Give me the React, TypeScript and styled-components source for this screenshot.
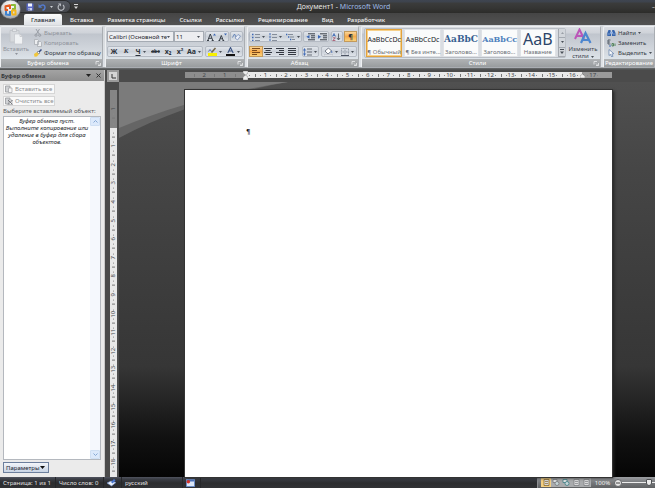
import React from 'react';
import styled, { createGlobalStyle, css } from 'styled-components';

const GlobalStyle = createGlobalStyle`
  * { box-sizing: border-box; }
  html, body { margin: 0; background: #4a4a4a; }
  body, button, input, select {
    font-family: "Noto Sans", "Open Sans", sans-serif;
    font-size: 6px;
    line-height: 8px;
  }
  button { margin: 0; padding: 0; border: 0; background: none; color: inherit; white-space: nowrap; }
  svg { display: block; flex: none; }
`;

const Window = styled.div`
  display: flex;
  flex-direction: column;
  height: 100vh;
  min-height: 240px;
  overflow: hidden;
  color: #333a44;
`;

/* ---------- title bar and tabs ---------- */

const Header = styled.header`
  position: relative;
  flex: none;
`;

const TitleBar = styled.div`
  display: grid;
  grid-template-columns: 1fr auto 1fr;
  align-items: center;
  height: 13px;
  background: linear-gradient(#3f4550 0, #3d434d 2px, #3b3c3c 3px, #353534 8px, #2c2c2a 13px);
`;

const QuickAccess = styled.div`
  display: flex;
  align-items: center;
  gap: 4px;
  margin-left: 18px;
`;

const QuickPill = styled.div`
  display: flex;
  align-items: center;
  gap: 4px;
  height: 11px;
  width: 52px;
  padding-left: 8px;
  border-radius: 0 6px 6px 0;
  background: linear-gradient(#565a63, #45474c);
  box-shadow: 0 0 0 1px #2c2d2f;
`;

const Title = styled.h1`
  margin: 0 0 0 32px;
  font-size: 7px;
  font-weight: 400;
  line-height: 12px;
  color: #e4e4e4;
  span { color: #9dbbe6; }
`;

const WindowButtons = styled.div`
  justify-self: end;
  color: #e8e8e8;
`;

const Orb = styled.button`
  position: absolute;
  left: 0;
  top: 0;
`;

const TabRow = styled.nav`
  display: flex;
  align-items: flex-end;
  height: 12px;
  padding-left: 24px;
  background: linear-gradient(#454545, #525252);
`;

const Tab = styled.button<{ $active?: boolean }>`
  height: 11px;
  padding: 0 7px;
  border-radius: 2px 2px 0 0;
  font-weight: 500;
  color: #f2f2f2;
  ${p => p.$active && css`
    margin-right: 1px;
    color: #2b2f36;
    background: linear-gradient(#fbfbfb, #dfe2e6);
  `}
`;

/* ---------- ribbon ---------- */

const Ribbon = styled.div`
  display: flex;
  flex: none;
  gap: 2px;
  height: 45px;
  padding: 1px 0 2px;
  background: linear-gradient(#d5d8dc 0, #dfe3e7 42px, #6c6f70 43px, #4b4d4d 45px);
`;

const GroupBox = styled.section<{ $width?: number }>`
  display: flex;
  flex-direction: column;
  flex: ${p => (p.$width ? `0 0 ${p.$width}px` : '1 1 0')};
  min-width: 0;
  border: 1px solid #a9adb2;
  border-top-color: #eef0f2;
  border-left-color: #eef0f2;
  border-radius: 2px;
  background: linear-gradient(#d9dce1 0, #cfd3d9 6px, #c0c5cd 7px, #d3d8de 24px, #dde4ea 33px);
`;

const GroupBody = styled.div`
  display: flex;
  flex: 1;
  min-height: 0;
`;

const GroupLabel = styled.div`
  display: flex;
  align-items: center;
  flex: none;
  height: 8px;
  color: #fff;
  background: linear-gradient(#b0b3b5, #989c9e);
  span { flex: 1; text-align: center; white-space: nowrap; }
`;

const Stack = styled.div`
  display: flex;
  flex-direction: column;
  justify-content: space-between;
  flex: 1;
  padding: 1px 0 1px 3px;
`;

const Command = styled.button<{ $muted?: boolean }>`
  display: flex;
  align-items: center;
  gap: 2px;
  height: 10px;
  color: ${p => (p.$muted ? '#8f939b' : '#333a44')};
`;

const BigButton = styled.button<{ $muted?: boolean; $width: number }>`
  display: flex;
  flex-direction: column;
  align-items: center;
  flex: none;
  width: ${p => p.$width}px;
  padding-top: 1px;
  line-height: 7px;
  color: ${p => (p.$muted ? '#8f939b' : '#3c434d')};
  svg + span { margin-top: 1px; }
`;

const InlineLabel = styled.span`
  display: flex;
  align-items: center;
  gap: 2px;
`;

const ToolRows = styled.div`
  display: flex;
  flex-direction: column;
  gap: 4px;
  flex: 1;
  padding: 4px 1px 0;
`;

const ToolRow = styled.div`
  display: flex;
  justify-content: space-between;
  height: 11px;
`;

const ButtonSet = styled.div`
  display: flex;
  height: 11px;
  border: 1px solid #b4bac3;
  border-radius: 2px;
  background: linear-gradient(#e2e6ec, #cbd1d9 50%, #dfe4ea);
`;

const Tool = styled.button<{ $width?: number; $on?: boolean }>`
  display: flex;
  align-items: center;
  justify-content: center;
  gap: 2px;
  width: ${p => p.$width ?? 12}px;
  height: 9px;
  color: #2d333c;
  ${p => p.$on && css`
    background: linear-gradient(#fbd598, #f5ab4c 50%, #fbd27a);
    box-shadow: 0 0 0 1px #c39a5c;
  `}
`;

const Glyph = styled.span<{ $kind?: 'under' | 'strike' | 'italic' | 'serif'; $small?: boolean }>`
  font-size: ${p => (p.$small ? 5 : 7)}px;
  line-height: 9px;
  font-weight: 700;
  font-style: ${p => (p.$kind === 'italic' ? 'italic' : 'normal')};
  font-family: ${p => (p.$kind === 'serif' || p.$kind === 'italic' ? '"Liberation Serif", serif' : '"Noto Sans", sans-serif')};
  text-decoration: ${p => (p.$kind === 'under' ? 'underline' : p.$kind === 'strike' ? 'line-through' : 'none')};
`;

const Combos = styled.div`
  display: flex;
`;

const ComboBox = styled.label<{ $width: number }>`
  display: flex;
  align-items: center;
  width: ${p => p.$width}px;
  height: 11px;
  padding-right: 3px;
  border: 1px solid #a5abb3;
  background: #ecedf0;
  select {
    flex: 1;
    min-width: 0;
    height: 9px;
    padding: 0 0 0 1px;
    border: 0;
    appearance: none;
    background: none;
    color: #20242a;
    text-overflow: clip;
  }
`;

const Gallery = styled.div`
  display: flex;
  flex: 1;
  gap: 2px;
  min-width: 0;
  margin: 1px 0 1px 2px;
  padding: 0 0 0 1px;
  border: 1px solid #b9bec5;
  border-radius: 2px;
  background: #d9dde2;
`;

const StyleTile = styled.button<{ $on?: boolean }>`
  display: flex;
  flex-direction: column;
  justify-content: space-between;
  flex: 1 1 0;
  min-width: 0;
  padding: 1px 0 0;
  border: 1px solid ${p => (p.$on ? '#e3a33c' : '#dfe2e6')};
  background: #fafbfb;
  color: #6b6f75;
  box-shadow: ${p => (p.$on ? 'inset 0 0 0 1px #f7d18b' : 'none')};
`;

const Sample = styled.span<{ $size: number; $color: string; $serif?: boolean }>`
  display: block;
  width: 100%;
  height: 17px;
  line-height: 17px;
  text-align: center;
  font-size: ${p => p.$size}px;
  font-weight: ${p => (p.$serif ? 700 : 400)};
  font-family: ${p => (p.$serif ? '"DejaVu Serif", serif' : '"Noto Sans", sans-serif')};
  color: ${p => p.$color};
`;

const TileName = styled.span`
  display: block;
  width: 100%;
  text-align: center;
`;

const GalleryArrows = styled.div`
  display: grid;
  grid-template-rows: repeat(3, 1fr);
  flex: none;
  width: 7px;
  border-left: 1px solid #a4a9b0;
  button { display: flex; align-items: center; justify-content: center; border-bottom: 1px solid #a4a9b0; background: #d2d6db; }
`;

/* ---------- workspace ---------- */

const Workspace = styled.main`
  display: flex;
  flex: 1;
  min-height: 0;
`;

const Pane = styled.aside`
  display: flex;
  flex-direction: column;
  flex: none;
  width: 105px;
  border-right: 1px solid #c9c9c9;
  background: #ebebeb;
`;

const PaneHeader = styled.div`
  display: flex;
  align-items: center;
  gap: 5px;
  height: 11px;
  padding: 0 3px 0 1px;
  color: #34373b;
  background: linear-gradient(#a3a3a3, #8e8e8e);
  h2 { flex: 1; margin: 0; font-size: 6px; font-weight: 700; white-space: nowrap; }
`;

const PaneBody = styled.div`
  display: flex;
  flex-direction: column;
  align-items: flex-start;
  flex: 1;
  min-height: 0;
  padding: 3px 3px 4px;
`;

const PaneButton = styled.button`
  display: flex;
  align-items: center;
  gap: 2px;
  width: 52px;
  height: 10px;
  margin-bottom: 2px;
  padding-left: 1px;
  border: 1px solid #d6d6d6;
  background: #fafafa;
  color: #8b8d91;
`;

const PaneCaption = styled.div`
  line-height: 7px;
  color: #55585c;
  white-space: nowrap;
`;

const ItemBox = styled.div`
  display: flex;
  flex: 1;
  align-self: stretch;
  min-height: 0;
  margin: 1px 0 2px;
  border: 1px solid #b4b8be;
  background: #fff;
  p { flex: 1; margin: 1px 0 0; text-align: center; font-style: italic; line-height: 7px; color: #22252a; }
`;

const ScrollTrack = styled.div`
  display: flex;
  flex-direction: column;
  justify-content: space-between;
  width: 10px;
  background: #f5f8fd;
  button { display: flex; align-items: center; justify-content: center; height: 9px; border: 1px solid #cfdff3; border-radius: 1px; background: #dce9fb; color: #86a8d4; }
`;

const OptionsButton = styled.button`
  display: flex;
  align-items: center;
  justify-content: space-between;
  width: 46px;
  height: 11px;
  padding: 0 3px 0 2px;
  border: 1px solid #6c7f9d;
  background: linear-gradient(#f3f6fa, #c7d3e4);
  color: #1c2430;
`;

const DocumentArea = styled.div`
  display: grid;
  grid-template-columns: 14px 1fr;
  grid-template-rows: 12px 1fr;
  flex: 1;
  min-width: 0;
  background: #4b4b4b;
`;

const TabStop = styled.button`
  display: flex;
  align-items: center;
  justify-content: center;
  width: 12px;
  height: 12px;
  margin-left: 2px;
  border: 2px solid #9a9a9a;
  background: #d4d4d4;
`;

const HRuler = styled.div`
  position: relative;
  display: grid;
  grid-template-columns: repeat(20, 1fr);
  height: 6px;
  margin: 2px 43px 0 66px;
  padding: 0 9px;
  background: linear-gradient(90deg, #8d8d8d 14%, #e9e9e9 14%, #e9e9e9 93%, #9a9a9a 93%);
`;

const HCell = styled.span`
  display: block;
  height: 6px;
  line-height: 6px;
  text-align: center;
  color: #45484c;
  background:
    linear-gradient(#777, #777) 0 50% / 1px 3px no-repeat,
    linear-gradient(#8a8a8a, #8a8a8a) 25% 50% / 1px 1px no-repeat,
    linear-gradient(#8a8a8a, #8a8a8a) 75% 50% / 1px 1px no-repeat;
`;

const Indent = styled.svg<{ $at: number }>`
  position: absolute;
  top: 0;
  left: ${p => p.$at}%;
  margin: -1px 0 0 -2px;
`;

const VRulerColumn = styled.div`
  display: flex;
  justify-content: center;
  padding: 8px 1px 0 3px;
  min-height: 0;
`;

const VRuler = styled.div`
  display: grid;
  grid-template-rows: repeat(20, 1fr);
  width: 7px;
  padding: 10px 0 5px;
  background: linear-gradient(#858585 38px, #e9e9e9 38px);
`;

const VCell = styled.span`
  display: flex;
  align-items: center;
  justify-content: center;
  min-height: 0;
  width: 7px;
  writing-mode: vertical-rl;
  transform: rotate(180deg);
  line-height: 7px;
  color: #45484c;
  background:
    linear-gradient(#777, #777) 50% 0 / 3px 1px no-repeat,
    linear-gradient(#8a8a8a, #8a8a8a) 50% 25% / 1px 1px no-repeat,
    linear-gradient(#8a8a8a, #8a8a8a) 50% 75% / 1px 1px no-repeat;
`;

const Canvas = styled.div`
  position: relative;
  display: flex;
  min-width: 0;
  padding: 8px 43px 0 66px;
  background: linear-gradient(#505050 0, #464646 22%, #363636 72%, #111 90%, #050505 100%);
`;

const Swoosh = styled.svg`
  position: absolute;
  left: 0;
  top: 0;
`;

const Sheet = styled.article`
  position: relative;
  flex: 1;
  padding: 38px 60px 0 61px;
  background: #fff;
  box-shadow: 0 0 0 1px #333, 2px 1px 3px #222;
  p { margin: 0; color: #111; font-family: "DejaVu Sans", sans-serif; font-size: 7px; }
`;

/* ---------- status bar ---------- */

const StatusBar = styled.footer`
  display: flex;
  flex: none;
  align-items: stretch;
  height: 11px;
  line-height: 11px;
  color: #e2e2e2;
  background: linear-gradient(#50545f 0, #3b3e46 2px, #2c2d2f 6px, #313235 11px);
`;

const StatusItem = styled.button<{ $width: number }>`
  display: flex;
  align-items: center;
  width: ${p => p.$width}px;
  padding-left: 3px;
  border-right: 1px solid #26272a;
`;

const StatusRight = styled.div`
  display: flex;
  align-items: center;
  margin-left: auto;
  width: 118px;
  padding-left: 3px;
  border-left: 1px solid #8d8f92;
  background: linear-gradient(#9b9ea2, #77797c 50%, #5f6163);
`;

const ViewButton = styled.button<{ $on?: boolean }>`
  display: flex;
  align-items: center;
  justify-content: center;
  width: 10px;
  height: 9px;
  background: ${p => (p.$on ? '#f3cf83' : '#a9abad')};
`;

const ZoomLevel = styled.button`
  width: 23px;
  text-align: center;
  color: #f1f1f1;
`;

const ZoomSlider = styled.input`
  flex: 1;
  min-width: 0;
  height: 9px;
  margin: 0;
  appearance: none;
  background: linear-gradient(#ececec, #ececec) 0 50% / 100% 1px no-repeat;
  &::-webkit-slider-thumb {
    appearance: none;
    width: 6px;
    height: 7px;
    border: 1px solid #4d4f52;
    border-radius: 1px 1px 3px 3px;
    background: #ececec;
  }
`;

/* ---------- icons ---------- */

const Caret = ({ color = '#4a5058' }: { color?: string }) => (
  <svg width="3" height="2" viewBox="0 0 3 2"><path d="M0 0h3L1.5 2z" fill={color} /></svg>
);

const MoreDark = () => (
  <svg width="4" height="5" viewBox="0 0 4 5" fill="#4a5058"><path d="M0 0h4v1H0zM0 2.500h4L2 5z" /></svg>
);

const Launcher = () => (
  <svg width="7" height="7" viewBox="0 0 7 7" fill="none" stroke="#eceeef">
    <path d="M1 4.5V1.5H4M3 3.5l2 2M5.5 3v2.5H3" strokeWidth=".8" />
  </svg>
);

const OfficeLogo = () => (
  <svg width="22" height="20" viewBox="0 0 22 20">
    <defs>
      <radialGradient id="orb" cx=".5" cy=".3" r=".75">
        <stop offset="0" stopColor="#fff" /><stop offset=".6" stopColor="#d3d5d8" /><stop offset="1" stopColor="#85898f" />
      </radialGradient>
    </defs>
    <ellipse cx="10.5" cy="9.5" rx="10" ry="9.5" fill="url(#orb)" stroke="#55585d" strokeWidth=".6" />
    <g fill="none" strokeWidth="2" strokeLinejoin="round">
      <path d="M10 9V5.3L5.5 6.3V10H8" stroke="#e45a1e" />
      <path d="M11 5h4v4h-3" stroke="#8dbb3a" />
      <path d="M6 11v3.5l4 .5v-4" stroke="#3f83d1" />
      <path d="M11.500 14.500h4V10.500h-3.500v3" stroke="#f3b51c" />
    </g>
  </svg>
);

const SaveIcon = () => (
  <svg width="8" height="8" viewBox="0 0 8 8">
    <path d="M.5.500h6.500l.5.500v6.500h-7z" fill="#5968c4" /><path d="M2 .5h4v3H2z" fill="#f2f5ff" /><path d="M2 5h4v2.500H2z" fill="#cdd4ee" /><path d="M2.500 5.500h1V7h-1z" fill="#3b4696" />
  </svg>
);

const UndoIcon = () => (
  <svg width="8" height="8" viewBox="0 0 8 8" fill="none" stroke="#5479c9" strokeWidth="1.500"><path d="M2 3.500C4 1 7 2 7 4.300 7 6 6 7 4.500 7.300" /><path d="M.5 1v3.800h3.800z" fill="#5479c9" stroke="none" /></svg>
);

const RedoIcon = () => (
  <svg width="8" height="8" viewBox="0 0 8 8" fill="none" stroke="#b9bcc2" strokeWidth="1.200"><path d="M2.200 2A3 3 0 1 0 6 2" /><path d="M1 .5h3v3z" fill="#b9bcc2" stroke="none" /></svg>
);

const MoreIcon = () => (
  <svg width="4" height="5" viewBox="0 0 4 5" fill="#d7d7d7"><path d="M0 0h4v1H0zM0 2.500h4L2 5z" /></svg>
);

const PasteIcon = () => (
  <svg width="14" height="17" viewBox="0 0 14 17">
    <path d="M1 2.500h9V14H1z" fill="#d6d9dd" stroke="#c3c6cb" /><path d="M3.500 1h4v2.500h-4z" fill="#e4e6e9" stroke="#b9bcc1" strokeWidth=".7" />
    <path d="M5.500 6H11l2.500 2.500v7.500h-8z" fill="#f0f2f4" stroke="#c3c6cb" strokeWidth=".7" /><path d="M11 6v2.500h2.500" fill="none" stroke="#bbbec3" strokeWidth=".7" />
  </svg>
);

const CutIcon = () => (
  <svg width="8" height="8" viewBox="0 0 8 8" fill="none" stroke="#9498a0" strokeWidth=".9"><path d="M2 0l3.200 5M5.500 0L2.500 5" /><circle cx="2" cy="6.200" r="1.100" /><circle cx="5.700" cy="6.200" r="1.100" /></svg>
);

const CopyIcon = () => (
  <svg width="8" height="8" viewBox="0 0 8 8" fill="#eceef0" stroke="#a4a7ad" strokeWidth=".7"><path d="M.500.500h3l1 1v4h-4zM3.500 2.500h3l1 1v4h-4z" /></svg>
);

const BrushIcon = () => (
  <svg width="8" height="8" viewBox="0 0 8 8"><path d="M0 5l3-2 2 2-2 2.500-2.500.3z" fill="#f0c63a" /><path d="M3 3l1-1 2 2-1 1z" fill="#fff" stroke="#54585f" strokeWidth=".5" /><path d="M5 3l2.500-2.500" stroke="#3a4d82" strokeWidth="1.500" /></svg>
);

const FontSizeIcon = ({ grow }: { grow?: boolean }) => (
  <svg width="9" height="8" viewBox="0 0 9 8" fill="none" stroke="#2d333c">
    <path d={grow ? 'M.8 7.500L3.300 1l2.500 6.500M1.800 5.300h3M0 7.500h2M4.700 7.500h2' : 'M1.300 7.500L3.300 2.500l2 5M2 5.800h2.600M.5 7.500h1.700M4.500 7.500h1.700'} strokeWidth=".9" />
    <path d={grow ? 'M6 2.500L7.500.500 9 2.500z' : 'M6 .5h3L7.500 2.500z'} fill="#3d68b5" stroke="none" />
  </svg>
);

const ClearIcon = () => (
  <svg width="9" height="8" viewBox="0 0 9 8"><path d="M.5 4.500L2.500 1l1.800 3.500" fill="none" stroke="#5c7fb8" strokeWidth=".9" /><path d="M3 5l3-3.500 2.500 1.500L5.500 7z" fill="#e9eef8" stroke="#6f86b4" strokeWidth=".7" /></svg>
);

const HighlightIcon = () => (
  <svg width="9" height="9" viewBox="0 0 9 9"><path d="M0 6h9v3H0z" fill="#f8f000" /><path d="M3.500 5.500L7.500 1" stroke="#75664a" strokeWidth="1.600" /><path d="M.5 4.500L2 2.500 3.500 4.500" fill="none" stroke="#3c5a94" strokeWidth=".8" /></svg>
);

const FontColorIcon = () => (
  <svg width="9" height="9" viewBox="0 0 9 9"><path d="M0 7h9v2H0z" fill="#111" /><path d="M1.800 6L4.500 .5 7.200 6M2.800 4h3.400" fill="none" stroke="#3e5684" strokeWidth="1.100" /></svg>
);

const ListIcon = ({ numbered }: { numbered?: boolean }) => (
  <svg width="8" height="8" viewBox="0 0 8 8">
    <path d="M3 1.500h5M3 4.500h5M3 7.500h5" stroke="#707886" strokeWidth=".8" />
    <path d={numbered ? 'M1 0v2.300M1 3v2.300M1 6v2' : 'M0 1.500h1.500M0 4.500h1.500M0 7.500h1.500'} stroke="#3d68b5" strokeWidth={numbered ? 1 : 1.300} />
  </svg>
);

const MultiIcon = () => (
  <svg width="9" height="8" viewBox="0 0 9 8"><path d="M2 1.500h5M4 4h4M6 6.500h3" stroke="#707886" strokeWidth=".8" /><path d="M0 1.500h1.300M2 4h1.300M4 6.500h1.300" stroke="#3d68b5" strokeWidth="1.300" /></svg>
);

const IndentIcon = ({ right }: { right?: boolean }) => (
  <svg width="9" height="8" viewBox="0 0 9 8"><path d="M2 .8h7M5 2.800h4M5 4.800h4M2 6.800h7" stroke="#3a3f48" strokeWidth="1" /><path d={right ? 'M0 2l3.200 1.800L0 5.800z' : 'M3.500 2L.3 3.800l3.200 2z'} fill="#3d68b5" /></svg>
);

const SortIcon = () => (
  <svg width="9" height="8" viewBox="0 0 9 8" fill="none" strokeWidth=".8"><path d="M.5 3.500L2 .5l1.500 3M1 2.500h2" stroke="#3d68b5" /><path d="M.8 4.800h2.600L.8 7.500h2.600" stroke="#a24a62" /><path d="M6.500.5v6M5 5l1.500 2L8 5" stroke="#444a55" /></svg>
);

const AlignIcon = ({ d, color = '#343942' }: { d: string; color?: string }) => (
  <svg width="8" height="7" viewBox="0 0 8 7"><path d={d} stroke={color} /></svg>
);

const SpacingIcon = () => (
  <svg width="9" height="8" viewBox="0 0 9 8"><path d="M4 1h5M4 4h5M4 7h5" stroke="#555b66" strokeWidth=".9" /><path d="M1.500 0L3 2.500H0zM1.500 8L0 5.500h3zM1.200 2h.7v4h-.7z" fill="#3d68b5" /></svg>
);

const FillIcon = () => (
  <svg width="9" height="9" viewBox="0 0 9 9"><path d="M1 4l3.500-3 3 3-3.500 3z" fill="#fff" stroke="#5b6372" strokeWidth=".8" /><path d="M7.200 3.500C9 4.500 8.500 6.500 7.500 6z" fill="#3d68b5" /><path d="M0 7.500h9V9H0z" fill="#eef0f3" stroke="#9da4af" strokeWidth=".4" /></svg>
);

const BordersIcon = () => (
  <svg width="8" height="8" viewBox="0 0 8 8" fill="none"><path d="M.5.500h7v7h-7zM4 .5v7M.5 4h7" stroke="#8b93a0" strokeWidth=".8" strokeDasharray="1 .5" /><path d="M0 7.500h8" stroke="#4d5564" /></svg>
);

const StylesIcon = () => (
  <svg width="18" height="17" viewBox="0 0 18 17" fill="none">
    <path d="M1 11L5.500 1.500 10 11M2.800 8h5.400" stroke="#bb56b8" strokeWidth="2" />
    <path d="M7 15l4.500-10 5 10M8.800 12h6" stroke="#4c86cf" strokeWidth="2.200" />
  </svg>
);

const FindIcon = () => (
  <svg width="9" height="8" viewBox="0 0 9 8"><path d="M1.500 1h2l.5 3v3H.3V4zM5.200 1h2L8.500 4v3H5V4z" fill="#3765ae" /><path d="M3.500 3h2v1.500h-2zM1 5h2M5.800 5h2" fill="#7fa4dc" stroke="#a9c3ea" strokeWidth=".6" /></svg>
);

const ReplaceIcon = () => (
  <svg width="9" height="8" viewBox="0 0 9 8" fill="none"><path d="M3.500 1H1v4h2.500M1 3h2" stroke="#4c5561" strokeWidth=".9" /><path d="M5 7V4.500h1.500V7zM8 7V4.500" stroke="#4b7f54" strokeWidth=".9" /><path d="M2 7h2" stroke="#3d68b5" /></svg>
);

const SelectIcon = () => (
  <svg width="9" height="8" viewBox="0 0 9 8"><path d="M2 .5v6l1.500-1.200L4.800 8 6 7.400 4.800 4.900l2-.2z" fill="#fff" stroke="#5878a8" strokeWidth=".7" /></svg>
);

const ClipIcon = ({ clear }: { clear?: boolean }) => (
  <svg width="8" height="8" viewBox="0 0 8 8"><path d="M.5 1h4.500v6H.5z" fill="#d0d2d5" stroke="#97999d" strokeWidth=".8" /><path d="M3.500 3h3.500v4.500H3.500z" fill="#f6f6f6" stroke="#97999d" strokeWidth=".6" />{clear && <path d="M3 3l4.500 4.500M7.500 3L3 7.500" stroke="#77797d" />}</svg>
);

const BookIcon = () => (
  <svg width="9" height="9" viewBox="0 0 9 9"><path d="M0 5l4-2 5 1.500L4.500 8z" fill="#eaf0fa" stroke="#6d8fce" strokeWidth=".6" /><path d="M4 4l3-3 1.500 1.500-3 3z" fill="#4774cf" /></svg>
);

const MacroIcon = () => (
  <svg width="9" height="8" viewBox="0 0 9 8"><path d="M.5.500h8v7h-8z" fill="#dbe6f8" stroke="#6a8bc4" /><path d="M1 1h7v1.500H1z" fill="#4d74bf" /><circle cx="2.300" cy="2.800" r="1.800" fill="#d3332b" /></svg>
);

const ViewIcon = ({ color = '#7e8083' }: { color?: string }) => (
  <svg width="7" height="7" viewBox="0 0 7 7"><path d="M1 .5h5v6H1z" fill="#dadbdc" stroke={color} strokeWidth=".8" /><path d="M2 2.500h3M2 4.500h3" stroke={color} strokeWidth=".7" /></svg>
);

const WebIcon = ({ color }: { color: string }) => (
  <svg width="8" height="7" viewBox="0 0 8 7" fill="none" stroke={color} strokeWidth=".8"><path d="M1 .5h4v3H1z" fill="#e0e2e3" /><circle cx="5" cy="4.500" r="2" fill="#c5d5d8" /></svg>
);

/* ---------- pieces ---------- */

type GroupProps = { title: string; width?: number; launcher?: boolean; children: React.ReactNode };

const Group = ({ title, width, launcher = true, children }: GroupProps) => (
  <GroupBox $width={width} aria-label={title}>
    <GroupBody>{children}</GroupBody>
    <GroupLabel><span>{title}</span>{launcher && <Launcher />}</GroupLabel>
  </GroupBox>
);

const Combo = ({ label, value, width }: { label: string; value: string; width: number }) => (
  <ComboBox $width={width}>
    <select aria-label={label}><option>{value}</option></select>
    <Caret />
  </ComboBox>
);

const tabs = ['Главная', 'Вставка', 'Разметка страницы', 'Ссылки', 'Рассылки', 'Рецензирование', 'Вид', 'Разработчик'];

const styleTiles = [
  { name: '¶ Обычный', sample: 'AaBbCcDc', size: 7, color: '#22252a', on: true },
  { name: '¶ Без инте...', sample: 'AaBbCcDc', size: 7, color: '#22252a' },
  { name: 'Заголово...', sample: 'AaBbC', size: 9, color: '#365f91', serif: true },
  { name: 'Заголово...', sample: 'AaBbCc', size: 8, color: '#4f81bd', serif: true },
  { name: 'Название', sample: 'AaB', size: 16, color: '#2c4468' },
];

const horizontal = Array.from({ length: 20 }, (_, i) => i - 2);
const vertical = Array.from({ length: 20 }, (_, i) => i - 1);

export default function App() {
  return (
    <Window>
      <GlobalStyle />
      <Header>
        <TitleBar>
          <QuickAccess>
            <QuickPill>
              <button aria-label="Сохранить"><SaveIcon /></button>
              <button aria-label="Отменить"><UndoIcon /></button>
              <Caret color="#c9ccd1" />
              <button aria-label="Вернуть"><RedoIcon /></button>
            </QuickPill>
            <button aria-label="Настройка панели"><MoreIcon /></button>
          </QuickAccess>
          <Title>Документ1 - <span>Microsoft Word</span></Title>
          <WindowButtons><button aria-label="Свернуть">–</button></WindowButtons>
        </TitleBar>
        <TabRow>
          {tabs.map((t, i) => <Tab key={t} $active={i === 0}>{t}</Tab>)}
        </TabRow>
        <Orb aria-label="Office"><OfficeLogo /></Orb>
      </Header>

      <Ribbon>
        <Group title="Буфер обмена" width={103}>
          <BigButton $width={30} $muted><PasteIcon /><span>Вставить</span><Caret color="#8f939b" /></BigButton>
          <Stack>
            <Command $muted><CutIcon />Вырезать</Command>
            <Command $muted><CopyIcon />Копировать</Command>
            <Command><BrushIcon />Формат по образцу</Command>
          </Stack>
        </Group>

        <Group title="Шрифт" width={140}>
          <ToolRows>
            <ToolRow>
              <Combos>
                <Combo label="Шрифт" value="Calibri (Основной текст)" width={67} />
                <Combo label="Размер" value="11" width={30} />
              </Combos>
              <ButtonSet>
                <Tool $width={11} aria-label="Увеличить"><FontSizeIcon grow /></Tool>
                <Tool $width={11} aria-label="Уменьшить"><FontSizeIcon /></Tool>
              </ButtonSet>
              <ButtonSet><Tool $width={11} aria-label="Очистить формат"><ClearIcon /></Tool></ButtonSet>
            </ToolRow>
            <ToolRow>
              <ButtonSet>
                <Tool><Glyph>Ж</Glyph></Tool>
                <Tool><Glyph $kind="italic">К</Glyph></Tool>
                <Tool $width={17}><Glyph $kind="under">Ч</Glyph><Caret /></Tool>
                <Tool $width={13}><Glyph $kind="strike" $small>abc</Glyph></Tool>
                <Tool><Glyph>x₂</Glyph></Tool>
                <Tool><Glyph>x²</Glyph></Tool>
                <Tool $width={16}><Glyph>Aa</Glyph><Caret /></Tool>
              </ButtonSet>
              <ButtonSet>
                <Tool $width={18} aria-label="Выделение"><HighlightIcon /><Caret /></Tool>
                <Tool $width={18} aria-label="Цвет текста"><FontColorIcon /><Caret /></Tool>
              </ButtonSet>
            </ToolRow>
          </ToolRows>
        </Group>

        <Group title="Абзац" width={112}>
          <ToolRows>
            <ToolRow>
              <ButtonSet>
                <Tool $width={17} aria-label="Маркеры"><ListIcon /><Caret /></Tool>
                <Tool $width={17} aria-label="Нумерация"><ListIcon numbered /><Caret /></Tool>
                <Tool $width={17} aria-label="Многоуровневый список"><MultiIcon /><Caret /></Tool>
              </ButtonSet>
              <ButtonSet>
                <Tool aria-label="Уменьшить отступ"><IndentIcon /></Tool>
                <Tool aria-label="Увеличить отступ"><IndentIcon right /></Tool>
              </ButtonSet>
              <ButtonSet><Tool $width={10} aria-label="Сортировка"><SortIcon /></Tool></ButtonSet>
              <ButtonSet><Tool $width={11} $on><Glyph>¶</Glyph></Tool></ButtonSet>
            </ToolRow>
            <ToolRow>
              <ButtonSet>
                <Tool $on aria-label="По левому краю"><AlignIcon color="#7c4a1b" d="M0 .5h8M0 2.500h5M0 4.500h8M0 6.500h5" /></Tool>
                <Tool aria-label="По центру"><AlignIcon d="M0 .5h8M1.500 2.500h5M0 4.500h8M1.500 6.500h5" /></Tool>
                <Tool aria-label="По правому краю"><AlignIcon d="M0 .5h8M3 2.500h5M0 4.500h8M3 6.500h5" /></Tool>
                <Tool aria-label="По ширине"><AlignIcon d="M0 .5h8M0 2.500h8M0 4.500h8M0 6.500h8" /></Tool>
              </ButtonSet>
              <ButtonSet><Tool $width={15} aria-label="Интервал"><SpacingIcon /><Caret /></Tool></ButtonSet>
              <ButtonSet>
                <Tool $width={17} aria-label="Заливка"><FillIcon /><Caret /></Tool>
                <Tool $width={17} aria-label="Границы"><BordersIcon /><Caret /></Tool>
              </ButtonSet>
            </ToolRow>
          </ToolRows>
        </Group>

        <Group title="Стили">
          <Gallery>
            {styleTiles.map((s, i) => (
              <StyleTile key={i} $on={s.on}>
                <Sample $size={s.size} $color={s.color} $serif={s.serif}>{s.sample}</Sample>
                <TileName>{s.name}</TileName>
              </StyleTile>
            ))}
            <GalleryArrows>
              <button aria-label="Вверх"><svg width="3" height="2" viewBox="0 0 3 2"><path d="M0 2h3L1.500 0z" fill="#9a9fa6" /></svg></button>
              <button aria-label="Вниз"><Caret /></button>
              <button aria-label="Ещё"><MoreDark /></button>
            </GalleryArrows>
          </Gallery>
          <BigButton $width={34}><StylesIcon /><span>Изменить</span><InlineLabel>стили <Caret /></InlineLabel></BigButton>
        </Group>

        <Group title="Редактирование" width={52} launcher={false}>
          <Stack>
            <Command><FindIcon />Найти <Caret /></Command>
            <Command><ReplaceIcon />Заменить</Command>
            <Command><SelectIcon />Выделить <Caret /></Command>
          </Stack>
        </Group>
      </Ribbon>

      <Workspace>
        <Pane>
          <PaneHeader>
            <h2>Буфер обмена</h2>
            <button aria-label="Меню"><svg width="5" height="3" viewBox="0 0 5 3"><path d="M0 0h5L2.500 3z" fill="#222" /></svg></button>
            <button aria-label="Закрыть"><svg width="5" height="5" viewBox="0 0 5 5"><path d="M.5.500l4 4M4.500.500l-4 4" stroke="#333" /></svg></button>
          </PaneHeader>
          <PaneBody>
            <PaneButton><ClipIcon />Вставить все</PaneButton>
            <PaneButton><ClipIcon clear />Очистить все</PaneButton>
            <PaneCaption>Выберите вставляемый объект:</PaneCaption>
            <ItemBox>
              <p>Буфер обмена пуст. Выполните копирование или удаление в буфер для сбора объектов.</p>
              <ScrollTrack>
                <button aria-label="Вверх"><svg width="5" height="3" viewBox="0 0 5 3"><path d="M.5 2.500l2-2 2 2" fill="none" stroke="currentColor" /></svg></button>
                <button aria-label="Вниз"><svg width="5" height="3" viewBox="0 0 5 3"><path d="M.5.500l2 2 2-2" fill="none" stroke="currentColor" /></svg></button>
              </ScrollTrack>
            </ItemBox>
            <OptionsButton>Параметры<svg width="5" height="3" viewBox="0 0 5 3"><path d="M0 0h5L2.500 3z" fill="#111" /></svg></OptionsButton>
          </PaneBody>
        </Pane>

        <DocumentArea>
          <TabStop aria-label="Табуляция"><svg width="5" height="5" viewBox="0 0 5 5"><path d="M1 0v4h4" fill="none" stroke="#333" /></svg></TabStop>
          <HRuler>
            {horizontal.map(n => <HCell key={n}>{n === 0 ? '' : Math.abs(n)}</HCell>)}
            <Indent $at={14} width="5" height="9" viewBox="0 0 5 9"><path d="M0 0h5v2L2.500 4 0 2zM2.500 4L5 6v3H0V6z" fill="#eee" stroke="#666" strokeWidth=".4" /></Indent>
            <Indent $at={93} width="5" height="9" viewBox="0 0 5 9"><path d="M2.500 3L5 5v2H0V5z" fill="#eee" stroke="#666" strokeWidth=".4" /></Indent>
          </HRuler>
          <VRulerColumn>
            <VRuler>
              {vertical.map(n => <VCell key={n}>{n === 0 ? '' : Math.abs(n)}</VCell>)}
            </VRuler>
          </VRulerColumn>
          <Canvas>
            <Swoosh width="175" height="60" viewBox="0 0 175 60">
              <path d="M0 0h169C110 11 50 29 0 56z" fill="#656565" />
              <path d="M0 0h169C110 9 50 25 0 46z" fill="#7b7b7b" />
            </Swoosh>
            <Sheet><p>¶</p></Sheet>
          </Canvas>
        </DocumentArea>
      </Workspace>

      <StatusBar>
        <StatusItem $width={56}>Страница: 1 из 1</StatusItem>
        <StatusItem $width={48}>Число слов: 0</StatusItem>
        <StatusItem $width={18} aria-label="Правописание"><BookIcon /></StatusItem>
        <StatusItem $width={61}>русский</StatusItem>
        <StatusItem $width={18} aria-label="Макрос"><MacroIcon /></StatusItem>
        <StatusRight>
          <ViewButton $on aria-label="Разметка"><ViewIcon color="#8c6a2c" /></ViewButton>
          <ViewButton aria-label="Чтение"><WebIcon color="#77797c" /></ViewButton>
          <ViewButton aria-label="Веб-документ"><WebIcon color="#3f8086" /></ViewButton>
          <ViewButton aria-label="Структура"><ViewIcon /></ViewButton>
          <ViewButton aria-label="Черновик"><ViewIcon /></ViewButton>
          <ZoomLevel>100%</ZoomLevel>
          <button aria-label="Уменьшить масштаб"><svg width="8" height="8" viewBox="0 0 8 8"><circle cx="4" cy="4" r="3.500" fill="#e6e6e6" stroke="#626467" /><path d="M2 4h4" stroke="#444" /></svg></button>
          <ZoomSlider type="range" aria-label="Масштаб" min="10" max="100" defaultValue="90" />
        </StatusRight>
      </StatusBar>
    </Window>
  );
}
